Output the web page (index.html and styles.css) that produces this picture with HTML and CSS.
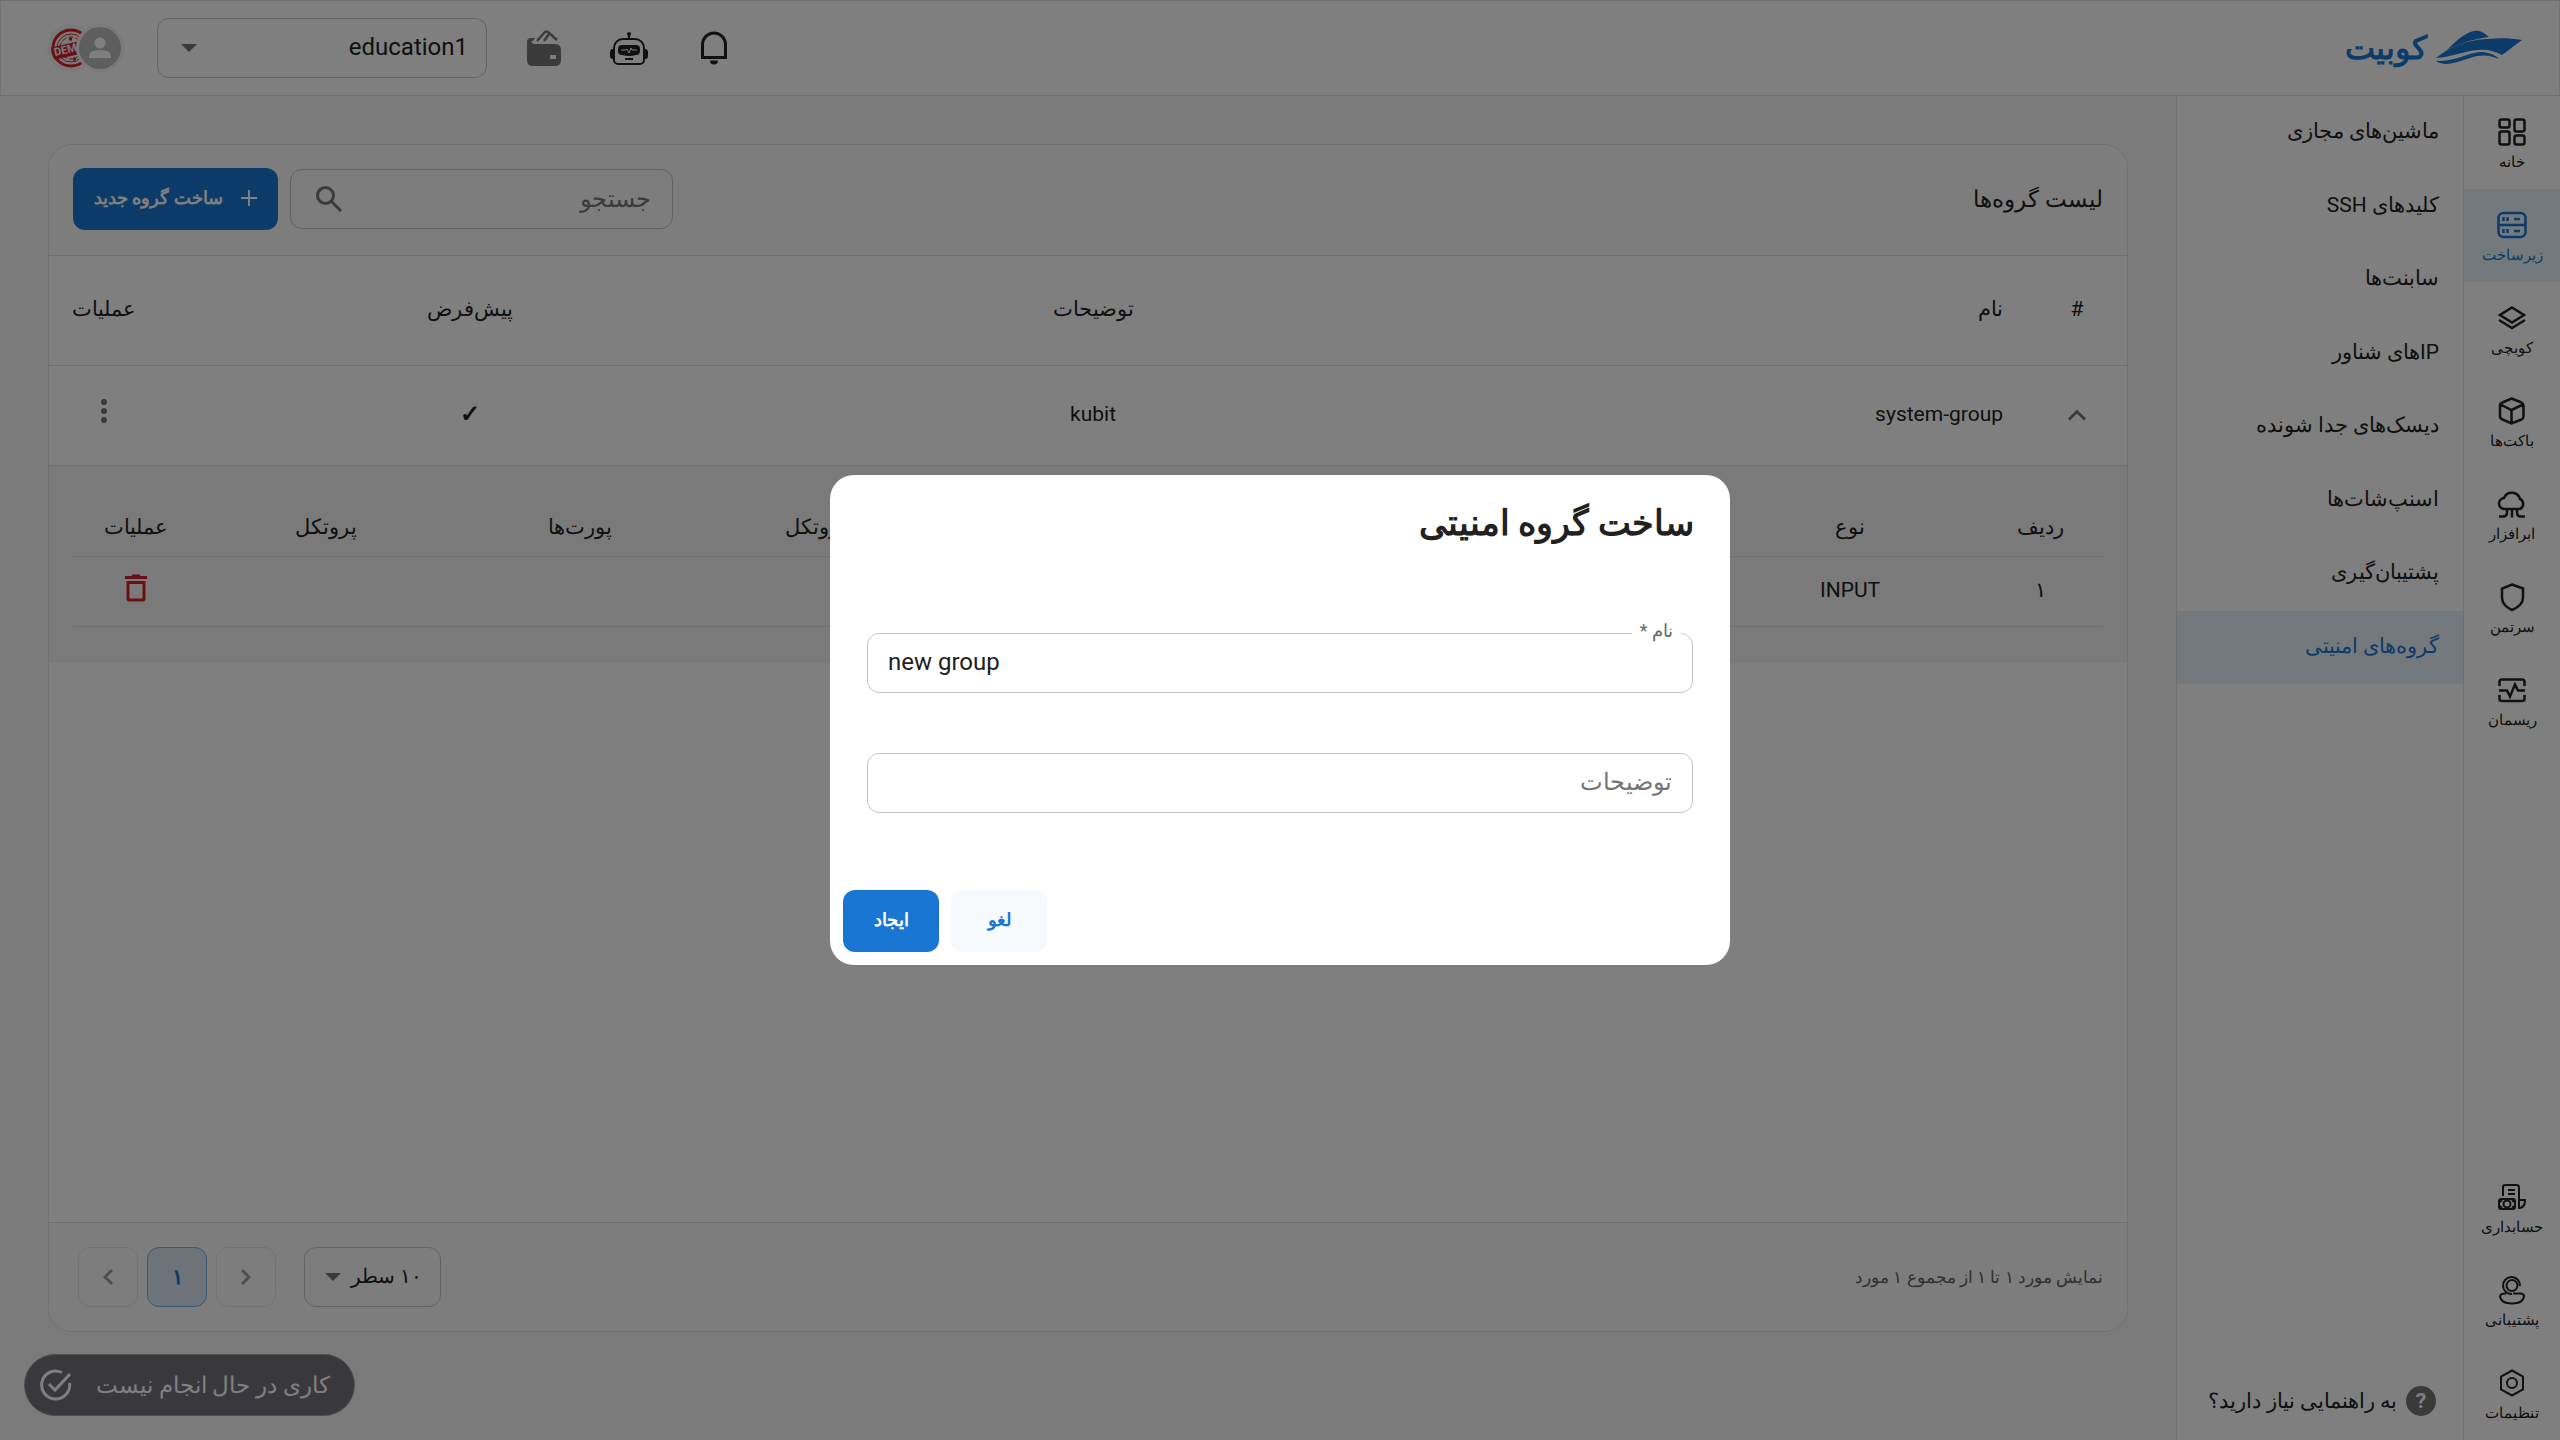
FILE: index.html
```
<!DOCTYPE html>
<html lang="fa" dir="rtl">
<head>
  <meta charset="UTF-8">
  <meta name="viewport" content="width=device-width, initial-scale=1.0">
  <title>کوبیت</title>
  <link rel="stylesheet" href="styles.css">
</head>
<body>
  <header class="header">
    <a href="#" class="logo">
      <svg width="88" height="38" viewBox="0 0 88 38" fill="currentColor">
        <path d="M12 21C20 13 29 4 39 2C46 1 50 5 54 8C40 10 27 13 12 21Z"/>
        <path d="M1 29C16 17 32 11 52 10C64 9 76 9 87 11C80 16 74 21 67 26C60 22 51 20 43 21C29 22 17 28 1 29Z"/>
        <path d="M1 32C18 33 33 24 45 23C53 23 59 25 64 30C55 26 48 26 42 27C28 30 12 40 1 32Z"/>
      </svg>
      <span>کوبیت</span>
    </a>

    <div class="header-tools">
      <div class="header-icons">
        <button class="icon-button" aria-label="اعلان‌ها">
          <svg width="36" height="36" viewBox="0 0 36 36" fill="none" stroke="currentColor" stroke-width="3">
            <path d="M6.500 27.500V14.500a11.500 11.500 0 0 1 23 0V27.500z"/>
            <path d="M14 30.500h8a4 4 0 0 1-8 0z" fill="currentColor" stroke="none"/>
          </svg>
        </button>
        <button class="icon-button" aria-label="دستیار">
          <svg width="38" height="36" viewBox="0 0 38 36" fill="none" stroke="currentColor" stroke-width="2">
            <circle cx="19" cy="4" r="2" fill="currentColor" stroke="none"/>
            <path d="M19 5v4"/>
            <path d="M13 9h12a9 9 0 0 1 9 9v12a4 4 0 0 1-4 4H8a4 4 0 0 1-4-4V18a9 9 0 0 1 9-9z"/>
            <path d="M3 20a2 2 0 0 0-2 2v4a2 2 0 0 0 2 2zM35 20a2 2 0 0 1 2 2v4a2 2 0 0 1-2 2z" fill="currentColor"/>
            <path d="M12 15h14q4 0 4 4v2q0 4-4 4q-7 2-14 0q-4 0-4-4v-2q0-4 4-4z" fill="currentColor" stroke="none"/>
            <path d="M11 20h5l1-1 2 4 2-5 1 2h5" stroke="#ffffff" stroke-width="1"/>
            <path d="M15 29h8"/>
          </svg>
        </button>
        <button class="icon-button wallet" aria-label="کیف پول">
          <svg width="36" height="38" viewBox="0 0 36 38">
            <path d="M1 13q0-4 4-4h4l-2 3h-2q1 3 3 3h21q6 0 6 6v10q0 6-6 6H7q-6 0-6-6z" fill="currentColor"/>
            <rect x="24" y="26" width="6" height="4" rx="1" fill="#ffffff"/>
            <path d="M11 12l8-9q2-1 3 0l9 8M18 12l5-7" fill="none" stroke="currentColor" stroke-width="2.500"/>
          </svg>
        </button>
      </div>

      <div class="select project-select">
        <select aria-label="پروژه">
          <option>education1</option>
        </select>
        <svg class="select-arrow" width="16" height="8" viewBox="0 0 16 8"><path d="M0 0h16l-8 8z" fill="currentColor"/></svg>
      </div>

      <div class="avatars">
        <svg width="78" height="50" viewBox="0 0 78 50">
          <defs><clipPath id="stamp"><circle cx="24" cy="25" r="20"/></clipPath></defs>
          <circle cx="24" cy="25" r="24" fill="#f5f5f5"/>
          <g clip-path="url(#stamp)" fill="none" stroke="#d3202b">
            <circle cx="24" cy="25" r="18" stroke-width="3"/>
            <circle cx="24" cy="25" r="14" stroke-width="1"/>
            <circle cx="24" cy="25" r="11" stroke-width="1" stroke-dasharray="5 2"/>
            <path d="M22 16h3M26 36h3" stroke-width="3"/>
            <path d="M2 25l44-10v13l-44 10z" fill="#d3202b" stroke="none"/>
          </g>
          <text x="8" y="33" class="stamp-text" transform="rotate(-13 8 33)">DEMO</text>
          <circle cx="53" cy="25" r="24" fill="#f5f5f5"/>
          <circle cx="53" cy="25" r="21" fill="#bdbdbd"/>
          <circle cx="53" cy="20" r="5.500" fill="#ffffff"/>
          <path d="M42 35v-2q0-6 11-6t11 6v2z" fill="#ffffff"/>
        </svg>
      </div>
    </div>
  </header>

  <div class="layout">
    <!-- Main sections -->
    <nav class="rail">
      <a href="#" class="rail-item">
        <svg class="rail-icon" viewBox="0 0 30 30"><rect x="2.500" y="2.500" width="10" height="8" rx="2"/><rect x="17.500" y="2.500" width="10" height="12" rx="2"/><rect x="2.500" y="14.500" width="10" height="13" rx="2"/><rect x="17.500" y="18.500" width="10" height="9" rx="2"/></svg>
        خانه
      </a>
      <a href="#" class="rail-item active">
        <svg class="rail-icon" viewBox="0 0 30 30"><rect x="1.500" y="3" width="27" height="24" rx="5"/><path d="M2 15h26M6.500 7v4M10.500 7v4M6.500 19v4M10.500 19v4M17 9h6M17 21h6"/></svg>
        زیرساخت
      </a>
      <a href="#" class="rail-item">
        <svg class="rail-icon" viewBox="0 0 30 30"><path d="M15 4.500l12 7.500-12 7.500L3 12zM2 17l13 8 13-8"/></svg>
        کوبچی
      </a>
      <a href="#" class="rail-item">
        <svg class="rail-icon" viewBox="0 0 30 30"><path d="M14.500 2.500l10 4q2 1 2 3v11q0 2-2 3l-10 4-9-4q-2.500-1-2.500-3v-11q0-2 2.500-3zM3.500 8.500l11 5.500 11.500-5.500M14.500 14v13"/></svg>
        باکت‌ها
      </a>
      <a href="#" class="rail-item">
        <svg class="rail-icon" viewBox="0 0 30 30"><path d="M8 20a5.500 5.500 0 0 1-1-11a8.500 8.500 0 0 1 16 1a5.500 5.500 0 0 1 0 10zM2 27.500h4q4 0 4-4V20M15 20v8.500M28 27.500h-4q-4 0-4-4V20"/></svg>
        ابرافزار
      </a>
      <a href="#" class="rail-item">
        <svg class="rail-icon" viewBox="0 0 30 30"><path d="M15 2.500l11 4v9q0 8-11 12.500q-10-4.500-10-12.500v-9z"/></svg>
        سرتمن
      </a>
      <a href="#" class="rail-item">
        <svg class="rail-icon" viewBox="0 0 30 30"><path d="M2.500 11V7q0-2.500 2.500-2.500h20q2.500 0 2.500 2.500v4M2.500 20v4q0 2 2.500 2h20q2.500 0 2.500-2v-4M2 15.500h8l3 6 5-12 3 6h7"/></svg>
        ریسمان
      </a>
      <div class="rail-spacer"></div>
      <a href="#" class="rail-item">
        <svg class="rail-icon thin" viewBox="0 0 30 30"><path d="M6 14V5q0-2 2.500-2h11q2.500 0 2.500 2.500V26q6 0 6-8h-6M11 8h7M11 12h7"/><rect x="2" y="17" width="16" height="10" rx="2"/><circle cx="10" cy="22" r="3.500"/><path d="M3 20l2-2M15 18l2 2M3 24l2 2M15 26l2-2"/></svg>
        حسابداری
      </a>
      <a href="#" class="rail-item">
        <svg class="rail-icon thin" viewBox="0 0 30 30"><circle cx="15" cy="10.500" r="5.500"/><path d="M23 11a8.500 8.500 0 1 0-8 8M9 18.500q-6 0-6 3q1 7 12 7t12-7q0-3-4-3h-7"/></svg>
        پشتیبانی
      </a>
      <a href="#" class="rail-item">
        <svg class="rail-icon thin" viewBox="0 0 30 30"><path d="M15 2.500l11 6v13l-11 6-11-6v-13z"/><circle cx="15" cy="15" r="5"/></svg>
        تنظیمات
      </a>
    </nav>

    <!-- Infrastructure menu -->
    <aside class="sidebar">
      <nav class="menu">
        <a href="#" class="menu-item">ماشین‌های مجازی</a>
        <a href="#" class="menu-item">کلیدهای SSH</a>
        <a href="#" class="menu-item">سابنت‌ها</a>
        <a href="#" class="menu-item">IPهای شناور</a>
        <a href="#" class="menu-item">دیسک‌های جدا شونده</a>
        <a href="#" class="menu-item">اسنپ‌شات‌ها</a>
        <a href="#" class="menu-item">پشتیبان‌گیری</a>
        <a href="#" class="menu-item active">گروه‌های امنیتی</a>
      </nav>
      <a href="#" class="help"><span class="help-icon">?</span>به راهنمایی نیاز دارید؟</a>
    </aside>

    <main class="main">
      <section class="card">
        <div class="card-header">
          <h2 class="card-title">لیست گروه‌ها</h2>
          <div class="card-actions">
            <div class="search">
              <input type="text" placeholder="جستجو" aria-label="جستجو">
              <svg width="28" height="28" viewBox="0 0 28 28" fill="none" stroke="currentColor" stroke-width="3"><circle cx="10.500" cy="10.500" r="8"/><path d="M16.500 16.500l9.500 9.500"/></svg>
            </div>
            <button class="button primary add-button">
              <svg width="16" height="16" viewBox="0 0 16 16" stroke="currentColor" stroke-width="2"><path d="M8 0v16M0 8h16"/></svg>
              ساخت گروه جدید
            </button>
          </div>
        </div>

        <table class="table">
          <thead>
            <tr>
              <th class="col-toggle">#</th>
              <th class="col-name">نام</th>
              <th>توضیحات</th>
              <th>پیش‌فرض</th>
              <th class="col-actions">عملیات</th>
            </tr>
          </thead>
          <tbody>
            <tr>
              <td>
                <button class="icon-button muted" aria-label="بستن">
                  <svg width="18" height="12" viewBox="0 0 18 12" fill="none" stroke="currentColor" stroke-width="3"><path d="M1 10.500l8-8 8 8"/></svg>
                </button>
              </td>
              <td class="col-name">system-group</td>
              <td>kubit</td>
              <td class="check">✓</td>
              <td>
                <button class="icon-button muted" aria-label="عملیات">
                  <svg width="6" height="26" viewBox="0 0 6 26" fill="currentColor"><circle cx="3" cy="4" r="3"/><circle cx="3" cy="13" r="3"/><circle cx="3" cy="22" r="3"/></svg>
                </button>
              </td>
            </tr>
          </tbody>
        </table>

        <div class="details">
          <table class="rules">
            <thead>
              <tr>
                <th class="col-edge">ردیف</th>
                <th>نوع</th>
                <th></th>
                <th></th>
                <th></th>
                <th>نوع پروتکل</th>
                <th>پورت‌ها</th>
                <th>پروتکل</th>
                <th class="col-edge">عملیات</th>
              </tr>
            </thead>
            <tbody>
              <tr>
                <td>۱</td>
                <td>INPUT</td>
                <td></td>
                <td></td>
                <td></td>
                <td></td>
                <td></td>
                <td></td>
                <td>
                  <button class="icon-button danger" aria-label="حذف">
                    <svg width="22" height="28" viewBox="0 0 22 28" fill="none" stroke="currentColor" stroke-width="3"><path d="M0 3.500h22"/><path d="M7 1.500h8" stroke-width="2"/><path d="M3 8.500h16v16q0 1.500-1.500 1.500h-13q-1.500 0-1.500-1.500z"/></svg>
                  </button>
                </td>
              </tr>
            </tbody>
          </table>
        </div>

        <div class="card-footer">
          <span class="summary">نمایش مورد ۱ تا ۱ از مجموع ۱ مورد</span>
          <div class="pagination">
            <div class="select rows-select">
              <select aria-label="تعداد سطر">
                <option>۱۰ سطر</option>
              </select>
              <svg class="select-arrow" width="16" height="8" viewBox="0 0 16 8"><path d="M0 0h16l-8 8z" fill="currentColor"/></svg>
            </div>
            <div class="pages">
              <button class="page" disabled aria-label="قبلی"><svg width="10" height="16" viewBox="0 0 10 16" fill="none" stroke="currentColor" stroke-width="3"><path d="M1 1l7 7-7 7"/></svg></button>
              <button class="page current">۱</button>
              <button class="page" disabled aria-label="بعدی"><svg width="10" height="16" viewBox="0 0 10 16" fill="none" stroke="currentColor" stroke-width="3"><path d="M9 1L2 8l7 7"/></svg></button>
            </div>
          </div>
        </div>
      </section>
    </main>
  </div>

  <div class="tasks">
    <span>کاری در حال انجام نیست</span>
    <svg width="32" height="32" viewBox="0 0 32 32" fill="none" stroke="currentColor" stroke-width="3"><path d="M22 3.500A14 14 0 1 0 29.500 14"/><path d="M9 15l6 6L30 5"/></svg>
  </div>

  <!-- Create group dialog -->
  <div class="backdrop">
    <form class="dialog" role="dialog" aria-labelledby="dialog-title">
      <h1 class="dialog-title" id="dialog-title">ساخت گروه امنیتی</h1>
      <div class="fields">
        <div class="field">
          <label for="name">نام *</label>
          <input type="text" id="name" dir="ltr" value="new group">
        </div>
        <div class="field">
          <input type="text" id="description" placeholder="توضیحات" aria-label="توضیحات">
        </div>
      </div>
      <div class="dialog-actions">
        <button type="button" class="button light">لغو</button>
        <button type="button" class="button primary">ایجاد</button>
      </div>
    </form>
  </div>
</body>
</html>
```
FILE: styles.css
```
* {
  box-sizing: border-box;
}

body {
  margin: 0;
  min-height: 100vh;
  display: flex;
  flex-direction: column;
  background-color: #f5f5f5;
  color: #212121;
  font-family: Roboto, "Liberation Sans", sans-serif;
  font-size: 21px;
}

a {
  color: inherit;
  text-decoration: none;
}

button,
input,
select {
  font-family: inherit;
  color: inherit;
}

button {
  cursor: pointer;
}

svg {
  display: block;
  flex-shrink: 0;
}

h1,
h2 {
  margin: 0;
}

/* Header */
.header {
  height: 96px;
  padding: 0 36px 0 46px;
  display: flex;
  justify-content: space-between;
  align-items: center;
  background-color: #ffffff;
  border: 1px solid #e0e0e0;
}

.logo {
  display: flex;
  align-items: center;
  gap: 8px;
  color: #1976d2;
  font-size: 32px;
  font-weight: bold;
}

.header-tools {
  display: flex;
  align-items: center;
  gap: 32px;
}

.header-icons {
  display: flex;
  align-items: center;
  gap: 48px;
  margin-left: 7px;
}

.icon-button {
  display: inline-flex;
  padding: 0;
  border: none;
  background: none;
}

.wallet,
.muted {
  color: #757575;
}

.danger {
  color: #d3202b;
}

.select {
  position: relative;
}

.select select {
  width: 100%;
  height: 60px;
  padding: 0 18px 3px;
  border: 1px solid #c4c4c4;
  border-radius: 12px;
  background-color: transparent;
  appearance: none;
  font-size: 24px;
}

.select-arrow {
  position: absolute;
  left: 24px;
  top: 26px;
  color: #757575;
  pointer-events: none;
}

.project-select {
  width: 330px;
}

.stamp-text {
  fill: #f5f5f5;
  font-size: 11px;
  font-weight: bold;
  direction: ltr;
}

/* Navigation */
.layout {
  flex: 1;
  display: flex;
}

.rail {
  width: 97px;
  display: flex;
  flex-direction: column;
  background-color: #ffffff;
  border-left: 1px solid #e0e0e0;
}

.rail-item {
  height: 93px;
  padding-top: 21px;
  display: flex;
  flex-direction: column;
  align-items: center;
  gap: 3px;
  font-size: 15px;
  line-height: 24px;
}

.rail-icon {
  width: 30px;
  height: 30px;
  fill: none;
  stroke: currentColor;
  stroke-width: 2.5px;
}

.thin {
  stroke-width: 2px;
}

.rail-spacer {
  flex: 1;
}

.active {
  color: #1976d2;
  background-color: #e9f3fa;
}

.sidebar {
  width: 287px;
  display: flex;
  flex-direction: column;
  justify-content: space-between;
  background-color: #ffffff;
  border-left: 1px solid #e0e0e0;
}

.menu {
  height: 588px;
  display: flex;
  flex-direction: column;
}

.menu-item {
  flex: 1;
  padding: 0 24px 3px;
  display: flex;
  align-items: center;
}

.help {
  padding: 24px 27px;
  display: flex;
  align-items: center;
  gap: 9px;
}

.help-icon {
  width: 30px;
  height: 30px;
  border-radius: 50%;
  background-color: #757575;
  color: #ffffff;
  text-align: center;
  line-height: 30px;
  font-weight: bold;
}

/* Groups list */
.main {
  flex: 1;
  padding: 48px 48px 108px;
  display: flex;
}

.card {
  flex: 1;
  display: flex;
  flex-direction: column;
  background-color: #ffffff;
  border: 1px solid #e0e0e0;
  border-radius: 24px;
  overflow: hidden;
}

.card-header {
  height: 111px;
  padding: 0 24px 2px;
  display: flex;
  justify-content: space-between;
  align-items: center;
  background-color: #fbfbfb;
  border-bottom: 1px solid #e0e0e0;
}

.card-title {
  font-size: 23px;
  font-weight: 500;
}

.card-actions {
  display: flex;
  align-items: center;
  gap: 12px;
}

.search {
  width: 383px;
  height: 60px;
  padding: 0 21px 0 24px;
  display: flex;
  align-items: center;
  border: 1px solid #c4c4c4;
  border-radius: 12px;
  color: #757575;
}

.search input {
  flex: 1;
  min-width: 0;
  padding: 0;
  border: none;
  outline: none;
  background: none;
  font-size: 24px;
}

.search input::placeholder,
.field input::placeholder {
  color: #757575;
  opacity: 1;
}

.button {
  min-width: 96px;
  height: 62px;
  padding: 0 21px 3px;
  display: flex;
  justify-content: center;
  align-items: center;
  border: none;
  border-radius: 12px;
  font-size: 18px;
  font-weight: bold;
}

.primary {
  background-color: #1976d2;
  color: #ffffff;
}

.light {
  background-color: #f6fafd;
  color: #1976d2;
}

.add-button {
  gap: 18px;
}

.table,
.rules {
  width: 100%;
  table-layout: fixed;
  border-collapse: collapse;
}

th,
td {
  padding: 0 0 3px;
  text-align: center;
  font-weight: normal;
  border-bottom: 1px solid #e0e0e0;
}

.table th {
  height: 109px;
}

.table td {
  height: 100px;
}

.table .col-toggle {
  width: 100px;
}

.table .col-name {
  padding: 0 24px 3px;
  text-align: right;
}

.table .col-actions {
  width: 110px;
}

.check {
  font-size: 24px;
  font-weight: bold;
}

.details {
  padding: 35px 24px 36px;
  background-color: #f5f5f5;
}

.rules th {
  height: 56px;
}

.rules td {
  height: 70px;
}

.rules .col-edge {
  width: 126px;
}

.card-footer {
  height: 109px;
  margin-top: auto;
  padding: 0 24px;
  display: flex;
  justify-content: space-between;
  align-items: center;
  background-color: #fbfbfb;
  border-top: 1px solid #e0e0e0;
}

.summary {
  font-size: 17px;
  color: #616161;
}

.pagination {
  display: flex;
  gap: 28px;
  padding-left: 5px;
}

.rows-select {
  width: 137px;
}

.rows-select select {
  font-size: 20px;
}

.rows-select .select-arrow {
  left: 21px;
}

.pages {
  display: flex;
  gap: 9px;
}

.page {
  width: 60px;
  height: 60px;
  display: flex;
  justify-content: center;
  align-items: center;
  border: 1px solid #e5e5e5;
  border-radius: 12px;
  background-color: transparent;
  color: #9e9e9e;
  font-size: 21px;
}

.current {
  border-color: #75aee6;
  background-color: #dbe6f2;
  color: #1976d2;
  font-weight: bold;
}

/* Running tasks */
.tasks {
  position: fixed;
  left: 24px;
  bottom: 24px;
  height: 62px;
  padding: 0 24px 0 15px;
  display: flex;
  align-items: center;
  gap: 24px;
  border: 1px solid #9e9e9e;
  border-radius: 31px;
  background-color: #727179;
  color: #ffffff;
  font-size: 23px;
}

/* Dialog */
.backdrop {
  position: fixed;
  inset: 0;
  display: flex;
  justify-content: center;
  align-items: center;
  background-color: rgba(0, 0, 0, 0.5);
}

.dialog {
  width: 900px;
  background-color: #ffffff;
  border-radius: 24px;
}

.dialog-title {
  padding: 24px 36px;
  font-size: 35px;
  line-height: 50px;
}

.fields {
  padding: 60px 37px 77px;
  display: flex;
  flex-direction: column;
  gap: 60px;
}

.field {
  position: relative;
}

.field input {
  display: block;
  width: 100%;
  height: 60px;
  padding: 0 20px 3px;
  border: 1px solid #c4c4c4;
  border-radius: 12px;
  outline: none;
  background: none;
  font-size: 24px;
}

.field label {
  position: absolute;
  top: -14px;
  right: 12px;
  padding: 0 8px;
  background-color: #ffffff;
  color: #666666;
  font-size: 18px;
  line-height: 24px;
}

.dialog-actions {
  padding: 0 13px 13px;
  display: flex;
  justify-content: flex-end;
  gap: 12px;
}
```
